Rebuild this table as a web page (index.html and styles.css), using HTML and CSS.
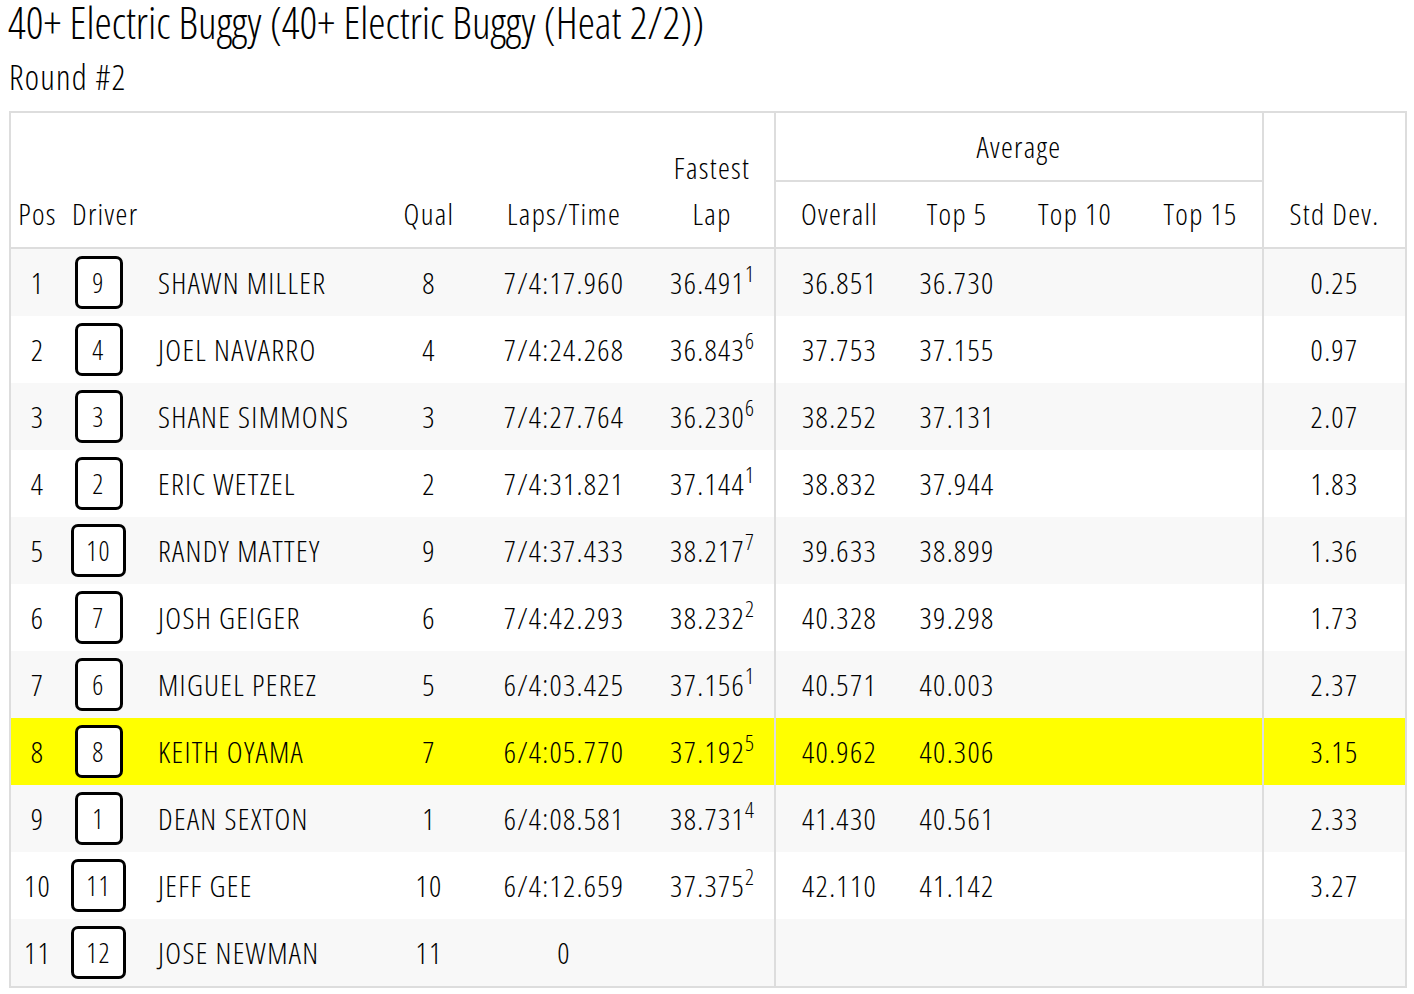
FILE: index.html
```html
<!DOCTYPE html>
<html>
<head>
<meta charset="utf-8">
<title>40+ Electric Buggy</title>
<link rel="stylesheet" href="styles.css">
</head>
<body>
<h1 class="title">40+ Electric Buggy (40+ Electric Buggy (Heat 2/2))</h1>
<h2 class="subtitle">Round #2</h2>
<table class="results">
  <colgroup>
    <col class="c-pos"><col class="c-badge"><col class="c-name"><col class="c-qual"><col class="c-laps"><col class="c-fast">
    <col class="c-ov"><col class="c-t5"><col class="c-t10"><col class="c-t15"><col class="c-std">
  </colgroup>
  <thead>
    <tr class="hrow1">
      <th rowspan="2" class="center">Pos</th>
      <th rowspan="2" colspan="2" class="left">Driver</th>
      <th rowspan="2" class="center">Qual</th>
      <th rowspan="2" class="center">Laps/Time</th>
      <th rowspan="2" class="center sep">Fastest<br>Lap</th>
      <th colspan="4" class="center avg sep">Average</th>
      <th rowspan="2" class="center">Std Dev.</th>
    </tr>
    <tr class="hrow2">
      <th class="center">Overall</th>
      <th class="center">Top 5</th>
      <th class="center">Top 10</th>
      <th class="center sep">Top 15</th>
    </tr>
  </thead>
  <tbody>
    <tr><td class="center">1</td><td class="center"><span class="badge">9</span></td><td class="name">SHAWN MILLER</td><td class="center">8</td><td class="center">7/4:17.960</td><td class="center sep">36.491<sup>1</sup></td><td class="center">36.851</td><td class="center">36.730</td><td></td><td class="sep"></td><td class="center">0.25</td></tr>
    <tr><td class="center">2</td><td class="center"><span class="badge">4</span></td><td class="name">JOEL NAVARRO</td><td class="center">4</td><td class="center">7/4:24.268</td><td class="center sep">36.843<sup>6</sup></td><td class="center">37.753</td><td class="center">37.155</td><td></td><td class="sep"></td><td class="center">0.97</td></tr>
    <tr><td class="center">3</td><td class="center"><span class="badge">3</span></td><td class="name">SHANE SIMMONS</td><td class="center">3</td><td class="center">7/4:27.764</td><td class="center sep">36.230<sup>6</sup></td><td class="center">38.252</td><td class="center">37.131</td><td></td><td class="sep"></td><td class="center">2.07</td></tr>
    <tr><td class="center">4</td><td class="center"><span class="badge">2</span></td><td class="name">ERIC WETZEL</td><td class="center">2</td><td class="center">7/4:31.821</td><td class="center sep">37.144<sup>1</sup></td><td class="center">38.832</td><td class="center">37.944</td><td></td><td class="sep"></td><td class="center">1.83</td></tr>
    <tr><td class="center">5</td><td class="center"><span class="badge">10</span></td><td class="name">RANDY MATTEY</td><td class="center">9</td><td class="center">7/4:37.433</td><td class="center sep">38.217<sup>7</sup></td><td class="center">39.633</td><td class="center">38.899</td><td></td><td class="sep"></td><td class="center">1.36</td></tr>
    <tr><td class="center">6</td><td class="center"><span class="badge">7</span></td><td class="name">JOSH GEIGER</td><td class="center">6</td><td class="center">7/4:42.293</td><td class="center sep">38.232<sup>2</sup></td><td class="center">40.328</td><td class="center">39.298</td><td></td><td class="sep"></td><td class="center">1.73</td></tr>
    <tr><td class="center">7</td><td class="center"><span class="badge">6</span></td><td class="name">MIGUEL PEREZ</td><td class="center">5</td><td class="center">6/4:03.425</td><td class="center sep">37.156<sup>1</sup></td><td class="center">40.571</td><td class="center">40.003</td><td></td><td class="sep"></td><td class="center">2.37</td></tr>
    <tr class="highlight"><td class="center">8</td><td class="center"><span class="badge">8</span></td><td class="name">KEITH OYAMA</td><td class="center">7</td><td class="center">6/4:05.770</td><td class="center sep">37.192<sup>5</sup></td><td class="center">40.962</td><td class="center">40.306</td><td></td><td class="sep"></td><td class="center">3.15</td></tr>
    <tr><td class="center">9</td><td class="center"><span class="badge">1</span></td><td class="name">DEAN SEXTON</td><td class="center">1</td><td class="center">6/4:08.581</td><td class="center sep">38.731<sup>4</sup></td><td class="center">41.430</td><td class="center">40.561</td><td></td><td class="sep"></td><td class="center">2.33</td></tr>
    <tr><td class="center">10</td><td class="center"><span class="badge">11</span></td><td class="name">JEFF GEE</td><td class="center">10</td><td class="center">6/4:12.659</td><td class="center sep">37.375<sup>2</sup></td><td class="center">42.110</td><td class="center">41.142</td><td></td><td class="sep"></td><td class="center">3.27</td></tr>
    <tr><td class="center">11</td><td class="center"><span class="badge">12</span></td><td class="name">JOSE NEWMAN</td><td class="center">11</td><td class="center">0</td><td class="center sep"></td><td></td><td></td><td></td><td class="sep"></td><td></td></tr>
  </tbody>
</table>
</body>
</html>
```
FILE: styles.css
```css
html, body {
  margin: 0;
  padding: 0;
  background: #fff;
}
body {
  padding: 0 7px 0 9px;
  font-family: "Open Sans", "Liberation Sans", sans-serif;
  font-stretch: 75%;
  font-weight: 300;
  color: #000;
}
.title {
  margin: 0;
  font-size: 43.6px;
  line-height: 44px;
  font-weight: 300;
  margin-left: -1px;
}
.subtitle {
  margin: 16px 0 17px 0;
  font-size: 34px;
  line-height: 1;
  font-weight: 300;
  letter-spacing: 1.25px;
}
.results {
  width: 1398px;
  margin-left: 0;
  border-collapse: collapse;
  table-layout: fixed;
  border: 2px solid #ddd;
  font-size: 30px;
  letter-spacing: 1.3px;
}
.c-pos { width: 54px; }
.c-badge { width: 69px; }
.c-name { width: 247px; }
.c-qual { width: 98px; }
.c-laps { width: 172px; }
.c-fast { width: 125px; }
.c-ov { width: 128px; }
.c-t5 { width: 108px; }
.c-t10 { width: 128px; }
.c-t15 { width: 124px; }
.c-std { width: 143px; }

.results th {
  font-weight: 300;
  line-height: 46px;
  padding: 0 0 10px 0;
  vertical-align: bottom;
  white-space: nowrap;
}
.results thead tr.hrow1 th.avg {
  vertical-align: middle;
  padding: 0;
  height: 67px;
  border-bottom: 2px solid #ddd;
}
.results thead tr.hrow2 th {
  height: 55px;
}
.results thead {
  border-bottom: 2px solid #ddd;
}
.results td {
  height: 67px;
  padding: 0;
  vertical-align: middle;
  line-height: 40px;
  white-space: nowrap;
}
.results tbody tr:nth-child(odd) {
  background: #f8f8f8;
}
.results tbody tr.highlight {
  background: #ffff00;
}
.center { text-align: center; }
.results th.left { text-align: left; padding-left: 8px; }
.name { text-align: left; padding-left: 25px !important; }
.sep { border-right: 2px solid #ddd; }

.badge {
  display: inline-block;
  box-sizing: border-box;
  min-width: 48px;
  height: 53px;
  padding: 0 12px;
  border: 3px solid #000;
  border-radius: 7px;
  background: #fff;
  font-size: 27px;
  line-height: 47px;
  vertical-align: middle;
}
sup {
  font-size: 22px;
  line-height: 0;
  vertical-align: 12px;
  letter-spacing: 0;
}
```
